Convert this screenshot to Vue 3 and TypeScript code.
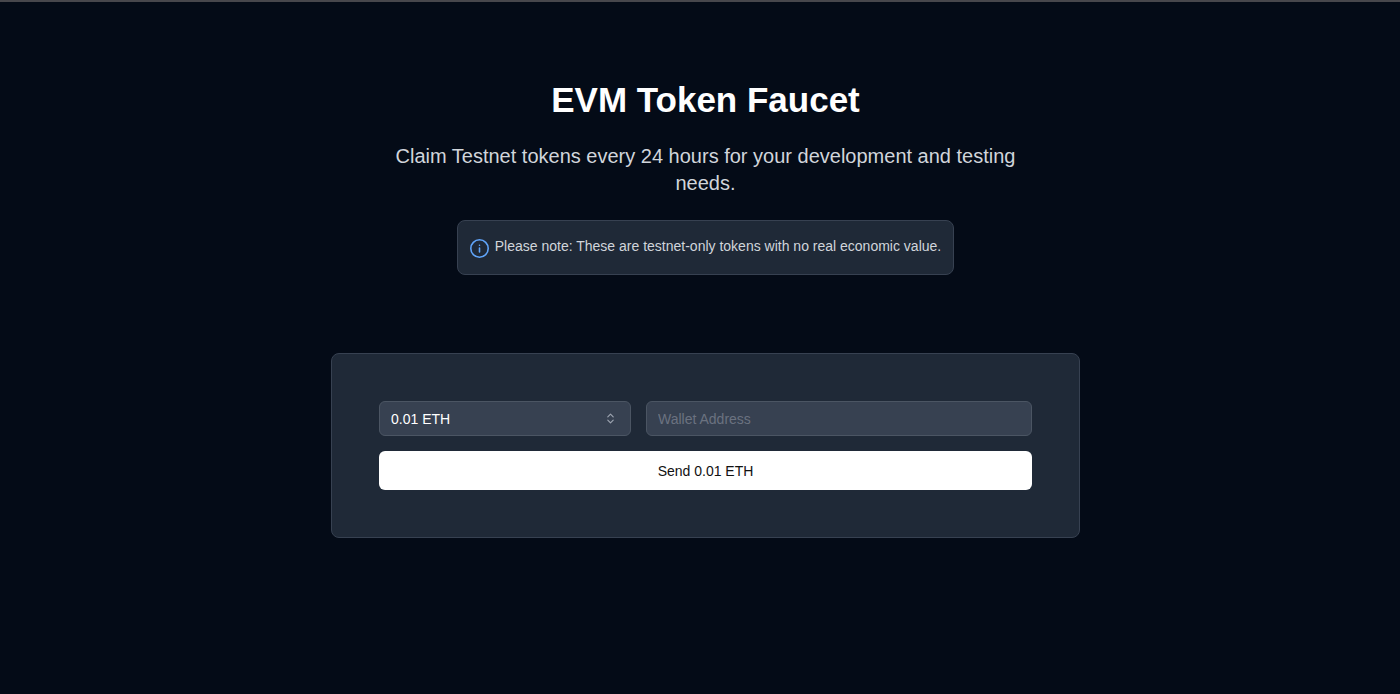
<script setup lang="ts">
import { computed, ref } from 'vue'

const amounts: string[] = ['0.01', '0.05', '0.1']
const amount = ref<string>('0.01')
const wallet = ref<string>('')
const sendLabel = computed<string>(() => `Send ${amount.value} ETH`)
</script>

<template>
  <main class="page">
    <header class="intro">
      <h1 class="title">EVM Token Faucet</h1>
      <p class="subtitle">Claim Testnet tokens every 24 hours for your development and testing needs.</p>
      <div class="note">
        <svg class="note-icon" viewBox="0 0 24 24" fill="none" stroke="currentColor" stroke-width="2" stroke-linecap="round" stroke-linejoin="round" aria-hidden="true">
          <circle cx="12" cy="12" r="11" />
          <path d="M12 16.500v-5M12 7.800h.01" />
        </svg>
        <p class="note-text">Please note: These are testnet-only tokens with no real economic value.</p>
      </div>
    </header>

    <form class="card" @submit.prevent>
      <div class="fields">
        <div class="select-wrap">
          <select v-model="amount" class="control" aria-label="Amount">
            <option v-for="a in amounts" :key="a" :value="a">{{ a }} ETH</option>
          </select>
          <svg class="chevrons" viewBox="0 0 15 15" fill="none" stroke="currentColor" stroke-width="1.2" stroke-linecap="round" stroke-linejoin="round" aria-hidden="true">
            <path d="M4.800 5.800 7.500 3.100l2.700 2.700M4.800 9.200l2.700 2.700 2.700-2.700" />
          </svg>
        </div>
        <input v-model="wallet" class="control wallet" type="text" placeholder="Wallet Address" aria-label="Wallet Address" />
      </div>
      <button class="send" type="submit">{{ sendLabel }}</button>
    </form>
  </main>
</template>

<style>
body {
  margin: 0;
  background: #040b17;
}
</style>

<style scoped>
.page {
  box-sizing: border-box;
  min-height: 100vh;
  padding: 78px 0 48px 11px;
  border-top: 2px solid #47474c;
  display: flex;
  flex-direction: column;
  align-items: center;
  gap: 78px;
  background: #040b17;
  color: #fff;
  font-family: "Liberation Sans", Arial, sans-serif;
}
.intro {
  display: flex;
  flex-direction: column;
  align-items: center;
  width: 100%;
  max-width: 656px;
  text-align: center;
}
.title {
  margin: 0 0 23px;
  font-size: 35px;
  line-height: 40px;
  font-weight: 700;
}
.subtitle {
  margin: 0 0 23px;
  font-size: 20px;
  line-height: 27px;
  color: #d1d5db;
}
.note {
  box-sizing: border-box;
  display: flex;
  align-items: flex-start;
  gap: 6px;
  padding: 16px 12px;
  border: 1px solid #374151;
  border-radius: 8px;
  background: #1f2937;
}
.note-icon {
  flex: none;
  width: 19px;
  height: 19px;
  margin-top: 2px;
  color: #60a5fa;
}
.note-text {
  margin: 0;
  font-size: 14px;
  line-height: 19px;
  color: #d1d5db;
}
.card {
  box-sizing: border-box;
  width: 100%;
  max-width: 749px;
  padding: 47px;
  border: 1px solid #374151;
  border-radius: 8px;
  background: #1f2937;
  display: flex;
  flex-direction: column;
  gap: 15px;
}
.fields {
  display: grid;
  grid-template-columns: 252fr 386fr;
  gap: 15px;
}
.select-wrap {
  position: relative;
}
.control {
  box-sizing: border-box;
  display: block;
  width: 100%;
  height: 35px;
  margin: 0;
  padding: 0 11px;
  border: 1px solid #4b5563;
  border-radius: 6px;
  background: #374151;
  color: #fff;
  font-family: inherit;
  font-size: 14px;
  appearance: none;
}
.wallet::placeholder {
  color: #6b7280;
  opacity: 1;
}
.chevrons {
  position: absolute;
  top: 10px;
  right: 13px;
  width: 15px;
  height: 15px;
  color: #9ca3af;
  pointer-events: none;
}
.send {
  height: 39px;
  padding: 0 16px;
  border: 0;
  border-radius: 6px;
  background: #fff;
  color: #111;
  font-family: inherit;
  font-size: 14px;
  cursor: pointer;
}
</style>
